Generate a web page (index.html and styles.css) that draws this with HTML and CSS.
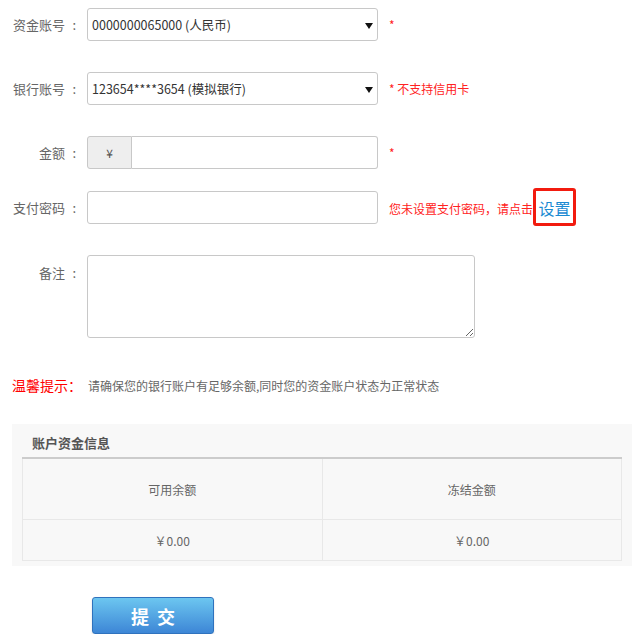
FILE: index.html
```html
<!DOCTYPE html>
<html>
<head>
    <title>资金转入</title>
    <meta charset="utf-8">
    <link rel="stylesheet" href="styles.css">
</head>

<body>
    <form class="form">
        <div class="row row-first">
            <label class="label">资金账号<span class="colon">:</span></label>
            <div class="select-wrap">
                <select class="select">
                    <option>0000000065000 (人民币)</option>
                </select>
                <span class="arrow"></span>
            </div>
            <span class="required">*</span>
        </div>

        <div class="row row-bank">
            <label class="label">银行账号<span class="colon">:</span></label>
            <div class="select-wrap">
                <select class="select">
                    <option>123654****3654 (模拟银行)</option>
                </select>
                <span class="arrow"></span>
            </div>
            <span class="required">* 不支持信用卡</span>
        </div>

        <div class="row row-amount">
            <label class="label">金额<span class="colon">:</span></label>
            <div class="input-group">
                <span class="addon">¥</span>
                <input type="text" class="input input-amount">
            </div>
            <span class="required">*</span>
        </div>

        <div class="row row-pwd">
            <label class="label">支付密码<span class="colon">:</span></label>
            <input type="password" class="input">
            <span class="hint">您未设置支付密码，请点击</span><a href="#" class="set-link">设置</a>
        </div>

        <div class="row row-remark">
            <label class="label">备注<span class="colon">:</span></label>
            <textarea class="textarea"></textarea>
        </div>

        <div class="tip">
            <span class="tip-title">温馨提示：</span>
            <span class="tip-text">请确保您的银行账户有足够余额,同时您的资金账户状态为正常状态</span>
        </div>

        <div class="panel">
            <div class="panel-title">账户资金信息</div>
            <table class="info-table">
                <tr class="head-row">
                    <td>可用余额</td>
                    <td>冻结金额</td>
                </tr>
                <tr class="value-row">
                    <td>￥0.00</td>
                    <td>￥0.00</td>
                </tr>
            </table>
        </div>

        <div class="actions">
            <button type="button" class="submit-btn">提 交</button>
        </div>
    </form>
</body>
</html>
```

FILE: styles.css
```css
body {
    margin: 0;
    padding: 0;
    font-family: "Microsoft YaHei", "Noto Sans CJK SC", sans-serif;
    font-size: 13px;
    color: #666;
    background-color: #fff;
}

.form {
    width: 642px;
}

.row {
    display: flex;
    align-items: center;
}

.row-first {
    margin-top: 8px;
}

.row-bank {
    margin-top: 31px;
}

.row-amount {
    margin-top: 31px;
}

.row-pwd {
    margin-top: 19px;
}

.row-remark {
    margin-top: 29px;
    align-items: flex-start;
}

.label {
    width: 79px;
    text-align: right;
    margin-right: 8px;
    color: #666;
    font-size: 13px;
}

.colon {
    display: inline-block;
    width: 14px;
    padding-right: 3px;
    box-sizing: border-box;
    text-align: right;
}

.row-remark .label {
    padding-top: 8px;
}

.select-wrap {
    position: relative;
    width: 291px;
    height: 33px;
}

.select {
    width: 100%;
    height: 33px;
    padding: 0 20px 0 4px;
    border: 1px solid #c8c8c8;
    border-radius: 3px;
    background-color: #fff;
    font-family: "Noto Sans CJK SC", sans-serif;
    font-size: 12.5px;
    color: #333;
    -webkit-appearance: none;
    appearance: none;
    box-sizing: border-box;
    outline: none;
}

.arrow {
    position: absolute;
    right: 5px;
    top: 15px;
    width: 0;
    height: 0;
    border-left: 4px solid transparent;
    border-right: 4px solid transparent;
    border-top: 6px solid #111;
}

.required {
    margin-left: 11px;
    color: #f22;
    font-size: 12px;
}

.input-group {
    display: flex;
    width: 291px;
    height: 33px;
}

.addon {
    width: 45px;
    height: 33px;
    line-height: 31px;
    text-align: center;
    background-color: #eee;
    border: 1px solid #c8c8c8;
    border-radius: 3px 0 0 3px;
    box-sizing: border-box;
    color: #555;
    font-size: 12px;
}

.input {
    width: 291px;
    height: 33px;
    border: 1px solid #c8c8c8;
    border-radius: 3px;
    box-sizing: border-box;
    padding: 0 6px;
    outline: none;
}

.input-amount {
    width: 246px;
    border-left: none;
    border-radius: 0 3px 3px 0;
}

.hint {
    margin-left: 11px;
    color: #f22;
    font-size: 12px;
    padding-top: 2px;
}

.set-link {
    display: inline-block;
    width: 43px;
    height: 38px;
    line-height: 34px;
    text-align: center;
    border: 3px solid #f21b0f;
    border-radius: 3px;
    box-sizing: border-box;
    color: #1a8ad2;
    font-size: 16px;
    text-decoration: none;
}

.textarea {
    width: 388px;
    height: 83px;
    border: 1px solid #c8c8c8;
    border-radius: 3px;
    box-sizing: border-box;
    resize: both;
    outline: none;
}

.tip {
    margin-top: 37px;
    padding-left: 12px;
    display: flex;
    align-items: center;
}

.tip-title {
    color: #f00;
    font-size: 14px;
    width: 76px;
}

.tip-text {
    color: #666;
    font-size: 12px;
}

.panel {
    margin: 29px 10px 0 12px;
    padding: 8px 10px 5px 10px;
    background-color: #f8f8f8;
}

.panel-title {
    padding-left: 10px;
    height: 25px;
    line-height: 21px;
    font-size: 13px;
    font-weight: bold;
    color: #555;
    border-bottom: 2px solid #ccc;
}

.info-table {
    width: 100%;
    border-collapse: collapse;
    font-size: 12px;
    color: #666;
}

.info-table td {
    width: 50%;
    padding: 0;
    text-align: center;
    border: 1px solid #e8e8e8;
    border-top: none;
}

.head-row td {
    height: 60px;
}

.value-row td {
    height: 40px;
    border-top: 1px solid #e8e8e8;
}

.actions {
    margin-top: 31px;
    padding-left: 92px;
}

.submit-btn {
    width: 122px;
    height: 37px;
    padding: 0 0 0 2px;
    border: 1px solid #2f72bd;
    border-radius: 3px;
    background: linear-gradient(#6cc6f0, #3d86d6);
    color: #fff;
    font-family: "Microsoft YaHei", "Noto Sans CJK SC", sans-serif;
    font-size: 18px;
    font-weight: bold;
    letter-spacing: 2px;
    cursor: pointer;
    box-shadow: 0 1px 2px rgba(0, 0, 0, 0.15);
}
```
